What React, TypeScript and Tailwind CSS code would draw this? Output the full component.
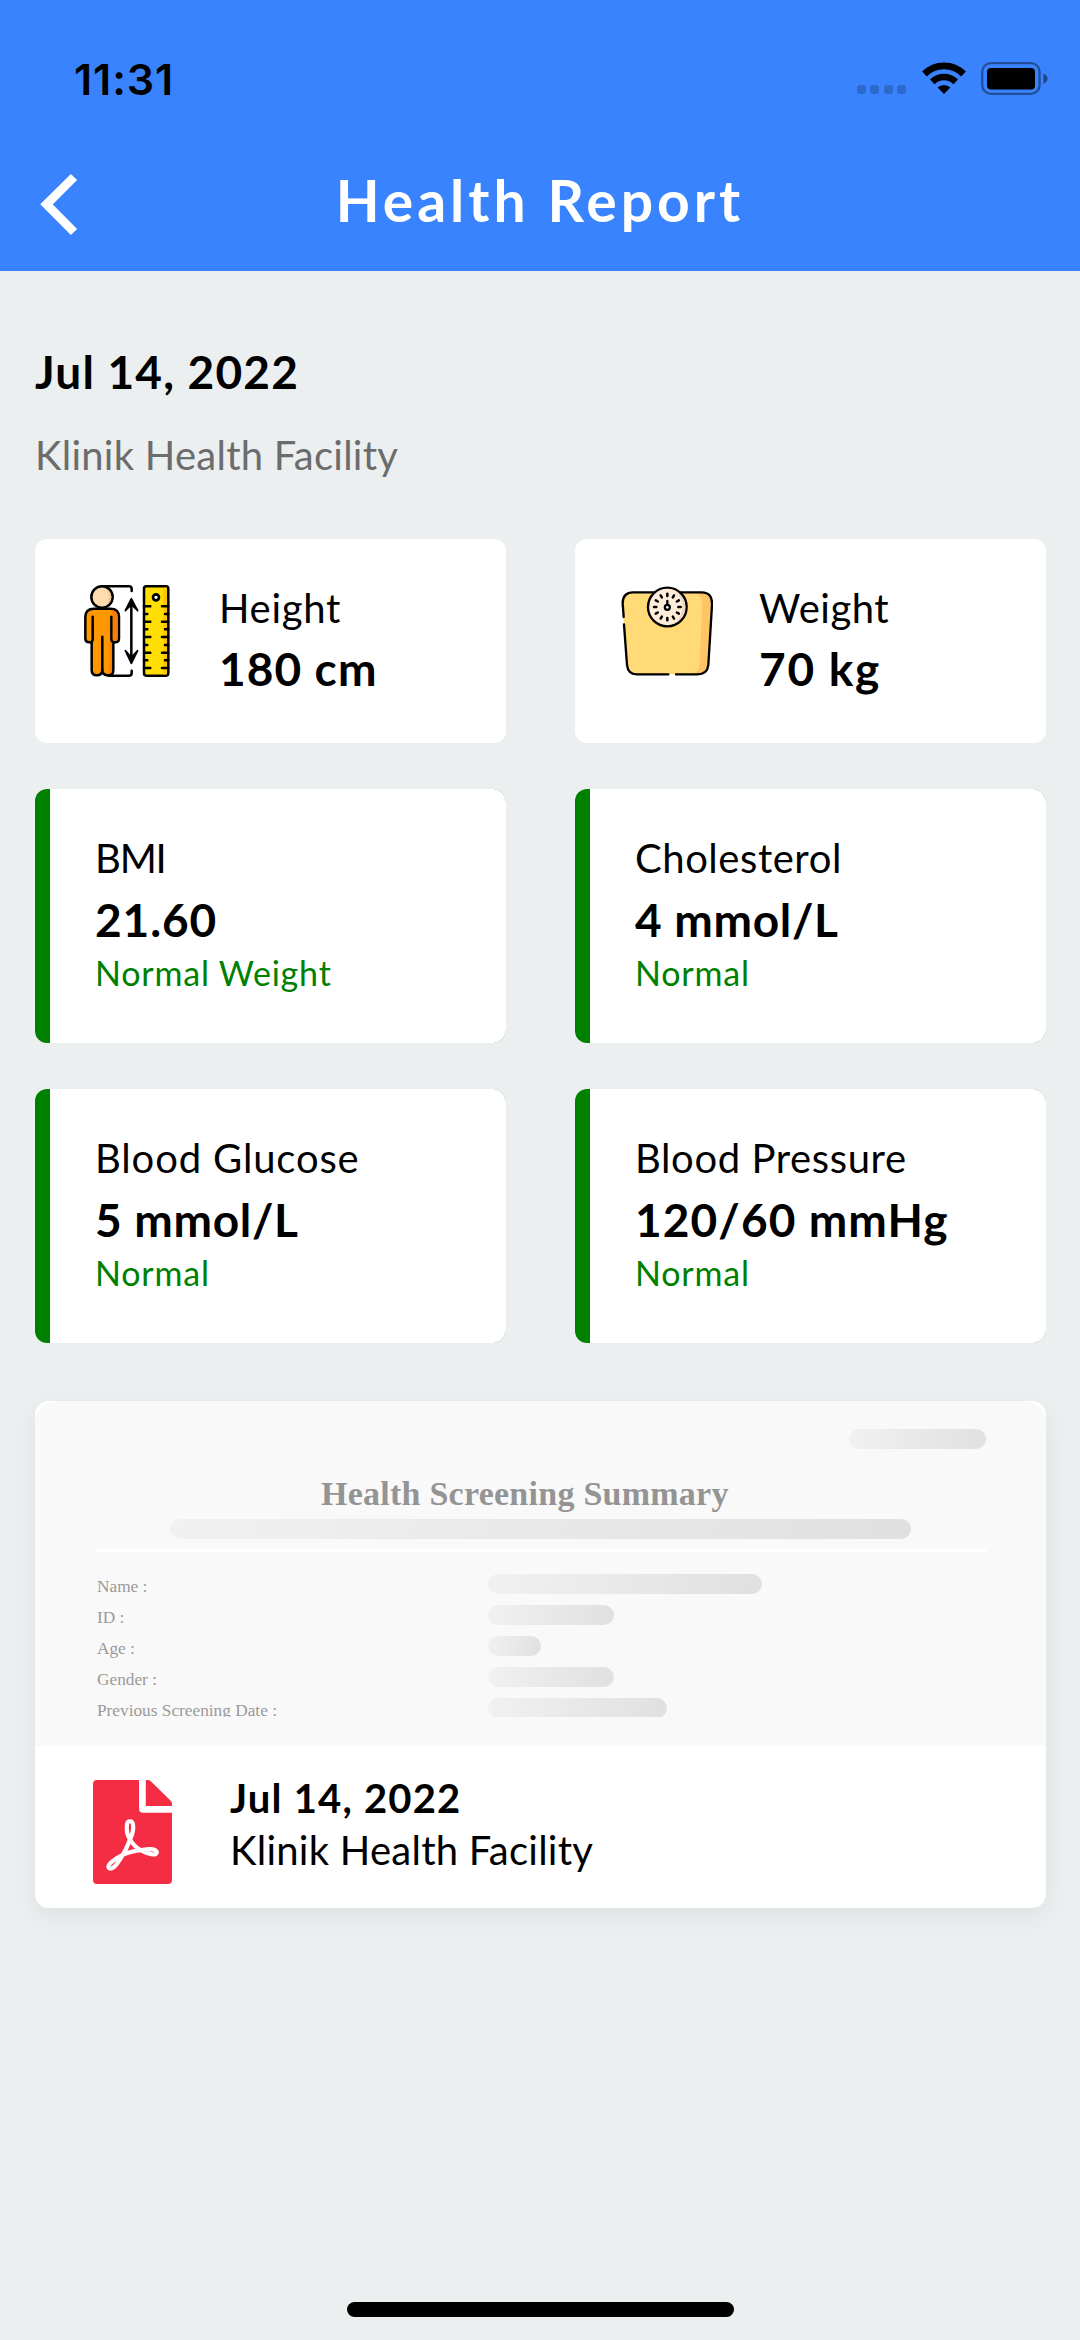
const LATO = "font-['Lato','Open_Sans',sans-serif]";
const SERIF = "font-['Liberation_Serif',serif]";

function StatusBar() {
  return (
    <div className="flex h-[165px] items-start justify-between pl-[74px] pr-8">
      <span className="mt-[57px] font-['Inter',sans-serif] text-[43px] font-semibold leading-[44px] tracking-[0.9px] text-black">
        11:31
      </span>
      <div className="mt-[62px] flex h-[33px] items-start">
        <div className="mt-[23px] flex gap-[4.5px]">
          {[0, 1, 2, 3].map((i) => (
            <span key={i} className="h-[9px] w-[9px] rounded-[3px] bg-black/20" />
          ))}
        </div>
        <svg className="ml-4 h-8 w-11" viewBox="0 0 44 32" fill="none">
          <path d="M2.5 12A27.6 27.6 0 0 1 41.5 12" stroke="#000" strokeWidth="6.8" />
          <path d="M10.3 19.8A16.5 16.5 0 0 1 33.7 19.8" stroke="#000" strokeWidth="6.6" />
          <path d="M15.6 25.6A9.2 9.2 0 0 1 28.4 25.6L22 32Z" fill="#000" />
        </svg>
        <svg className="ml-[15px] h-[33px] w-[67px]" viewBox="0 0 67 33">
          <rect x="1.2" y="1.2" width="57.4" height="30.6" rx="8.5" fill="none" stroke="#000" strokeOpacity="0.4" strokeWidth="2.3" />
          <rect x="6" y="6" width="48" height="21.4" rx="4" fill="#000" />
          <path d="M62.4 11.4C68 13.6 68 19.6 62.4 21.8Z" fill="#000" fillOpacity="0.45" />
        </svg>
      </div>
    </div>
  );
}

function Header() {
  return (
    <header className="h-[271px] shrink-0 bg-[#3983ff]">
      <StatusBar />
      <div className="grid grid-cols-[1fr_auto_1fr] items-start">
        <svg className="ml-10 mt-2 h-[63px] w-[38px]" viewBox="0 0 38 63" fill="none">
          <path d="M34 4L6.5 31.3L34 59" stroke="#fff" strokeWidth="8.8" />
        </svg>
        <h1 className={`${LATO} text-[57px] font-bold leading-[70px] tracking-[4px] text-white`}>Health Report</h1>
        <span />
      </div>
    </header>
  );
}

function HeightIcon() {
  const ticks = [109, 132, 155, 178, 201, 225, 248, 271, 294];
  return (
    <svg className="h-[92px] w-[92px]" viewBox="33 45 276 276" fill="none" stroke="#000" strokeWidth="7.5" strokeLinecap="round" strokeLinejoin="round">
      <path d="M96 49H177Q185 49 185 57V63M115 317H178Q185 317 185 310V302" />
      <circle cx="96" cy="81" r="32" fill="#ffdcb0" />
      <path d="M112 60Q122 81 110 102Q124 96 124 81Q123 66 112 60Z" fill="#efc99c" stroke="none" />
      <path
        d="M65 217H58Q46 217 46 205V141Q46 116 72 116H121Q147 116 147 141V205Q147 217 136 217H130V300Q130 316 115 316Q97 316 97 300Q97 316 80 316Q65 316 65 300Z"
        fill="#ff9800"
      />
      <path d="M126 120Q143 122 143 141V205Q143 213 136 213H128V140ZM126 219V300Q126 312 115 312Q122 300 118 219Z" fill="#fb7d05" stroke="none" />
      <path d="M68 140V208Q68 215 62 217M124 140V208Q124 215 131 217M97 200V300" />
      <path d="M184 92V276" />
      <path d="M166 122L184 86L203 122L184 104ZM166 242L184 280L203 242L184 262Z" fill="#000" strokeWidth="5" />
      <rect x="222" y="49" width="73" height="268" rx="7" fill="#ffde00" />
      <path d="M280 53H291V313H280Z" fill="#fdc400" stroke="none" />
      <circle cx="258" cy="82" r="9" fill="#fff" strokeWidth="8" />
      <path d={ticks.map((y, i) => (i % 2 ? `M222 ${y}H232M295 ${y}H285` : `M222 ${y}H241M295 ${y}H276`)).join("")} />
    </svg>
  );
}

function WeightIcon() {
  const angles = [0, 30, 60, 90, 120, 150, 180, 210, 240, 270, 300, 330];
  return (
    <svg className="h-[92px] w-[92px]" viewBox="63 45 276 276" fill="none" stroke="#000" strokeWidth="7" strokeLinecap="round" strokeLinejoin="round">
      <path d="M100 67H305Q338 67 336 105L325 285Q322 313 292 313H110Q84 313 81 285L68 105Q66 67 100 67Z" fill="#ffda76" stroke="none" />
      <path d="M286 69H305Q338 67 334 105L323 285Q320 311 292 311H278Q298 305 299 280L307 100Q307 76 286 69Z" fill="#ffc464" stroke="none" />
      <path d="M71 141L68 100Q68 67 100 67H305Q338 67 336 105L325 285Q322 313 292 313H228M205 313H110Q84 313 81 285L72 163" />
      <circle cx="202" cy="111" r="58" fill="#ffeddb" />
      <path d="M222 65Q248 80 248 111Q248 142 222 157Q256 146 256 111Q256 76 222 65Z" fill="#ecd5bf" stroke="none" />
      {angles.map((a) => (
        <path key={a} d="M202 71V78" strokeWidth="7.5" transform={`rotate(${a} 202 111)`} />
      ))}
      <circle cx="202" cy="112" r="7.5" fill="#fff" strokeWidth="7" />
      <path d="M202 104V93" />
    </svg>
  );
}

function PdfIcon() {
  return (
    <svg className="h-[104px] w-[79px]" viewBox="70 60 235 311" preserveAspectRatio="none">
      <path
        d="M82 60H207V146Q207 158 219 158H305V359Q305 371 293 371H82Q70 371 70 359V72Q70 60 82 60ZM227 60H233Q238 60 242 64L302 123Q305 126 305 131V138H227Z"
        fill="#f42c44"
      />
      <path
        d="M180 238C171 222 169 206 171 193C173 180 187 180 189 193C191 206 188 222 180 238C170 266 156 290 141 311C133 324 118 329 116 321C113 312 135 295 160 283C180 274 200 271 218 269C240 265 258 267 260 276C261 287 238 284 216 272C200 264 190 255 180 238Z"
        fill="none"
        stroke="#fff"
        strokeWidth="12.5"
        strokeLinejoin="round"
      />
    </svg>
  );
}

const LABEL = "text-[40px] leading-[48px]";
const VALUE = "text-[46px] font-bold leading-[56px]";

function MeasureCard({ icon, label, labelClass, value, valueClass }: { icon: React.ReactNode; label: string; labelClass: string; value: string; valueClass: string }) {
  return (
    <div className="flex h-[204px] items-start gap-[46px] rounded-xl bg-white pl-[46px] pt-[45px]">
      <div className="mt-px">{icon}</div>
      <div className="flex flex-col gap-[9px]">
        <span className={`${LABEL} ${labelClass}`}>{label}</span>
        <span className={`${VALUE} ${valueClass}`}>{value}</span>
      </div>
    </div>
  );
}

function ResultCard({ label, labelClass, value, valueClass, status }: { label: string; labelClass: string; value: string; valueClass: string; status: string }) {
  return (
    <div className="relative flex h-[254px] overflow-hidden rounded-xl bg-white">
      <div className="w-[15px] shrink-0 bg-[#008000]" />
      <div className="flex flex-col items-start pl-[45px] pt-[45px]">
        <span className={`${LABEL} ${labelClass}`}>{label}</span>
        <span className={`mt-2.5 ${VALUE} ${valueClass}`}>{value}</span>
        <span className="mt-1 text-[34px] leading-[42px] tracking-[0.8px] text-[#008000]">{status}</span>
      </div>
      <span className="absolute right-0 top-0 h-3 w-3 rounded-tr-xl border-r border-t border-[#008000]/20" />
      <span className="absolute bottom-0 right-0 h-3 w-3 rounded-br-xl border-b border-r border-[#008000]/20" />
    </div>
  );
}

const RESULTS = [
  { label: "BMI", labelClass: "tracking-[-1.2px]", value: "21.60", valueClass: "tracking-[0.9px]", status: "Normal Weight" },
  { label: "Cholesterol", labelClass: "tracking-[0.55px]", value: "4 mmol/L", valueClass: "tracking-[0.7px]", status: "Normal" },
  { label: "Blood Glucose", labelClass: "tracking-[0.85px]", value: "5 mmol/L", valueClass: "tracking-[0.7px]", status: "Normal" },
  { label: "Blood Pressure", labelClass: "tracking-[0.6px]", value: "120/60 mmHg", valueClass: "tracking-[1.1px]", status: "Normal" },
];

const BAR = "bg-[linear-gradient(100deg,#f1f1f1,#e0e0e0)]";

const FIELDS = [
  { label: "Name :", width: "w-[274px]" },
  { label: "ID :", width: "w-[126px]" },
  { label: "Age :", width: "w-[53px]" },
  { label: "Gender :", width: "w-[126px]" },
  { label: "Previous Screening Date :", width: "w-[179px]" },
];

function DocumentCard() {
  return (
    <div className="mt-[58px] h-[507px] rounded-[14px] bg-white shadow-[0_9px_26px_rgba(0,0,0,0.06)]">
      <div className={`${SERIF} flex h-[345px] flex-col rounded-t-[22px] bg-[#f9f9f9] pl-[60px] pr-[60px] pt-7`}>
        <div className={`h-5 w-[137px] shrink-0 self-end rounded-full ${BAR}`} />
        <span className="ml-[226px] mt-[25px] text-[34px] font-bold leading-10 tracking-[0.25px] text-[#949494]">
          Health Screening Summary
        </span>
        <div className={`mt-[5px] h-5 w-[741px] shrink-0 self-center rounded-full ${BAR}`} />
        <div className="mt-2.5 h-[3px] shrink-0 bg-white" />
        <div className="mt-[22px] flex h-[143px] shrink-0 flex-col gap-[11px] overflow-hidden pl-0.5">
          {FIELDS.map((f) => (
            <div key={f.label} className="flex h-5 shrink-0 items-start">
              <span className="w-[391px] text-[17.3px] leading-[26px] text-[#9a9a9a]">{f.label}</span>
              <span className={`h-5 rounded-full ${BAR} ${f.width}`} />
            </div>
          ))}
        </div>
      </div>
      <div className="flex items-start pl-[58px] pt-[28px]">
        <div className="mt-1.5">
          <PdfIcon />
        </div>
        <div className="ml-[58px] flex flex-col gap-1">
          <span className="text-[40px] font-bold leading-[48px] tracking-[1.2px]">Jul 14, 2022</span>
          <span className="text-[40px] leading-[48px] tracking-[0.25px]">Klinik Health Facility</span>
        </div>
      </div>
    </div>
  );
}

export default function App() {
  return (
    <div className="flex h-[2340px] w-[1080px] flex-col overflow-hidden bg-[#ebeff0] text-black">
      <Header />
      <main className={`${LATO} pl-[35px] pr-[34px] pt-[73px]`}>
        <h2 className="text-[46px] font-bold leading-[56px] tracking-[1.2px]">Jul 14, 2022</h2>
        <p className="mt-[31px] text-[40px] leading-[48px] tracking-[0.25px] text-[#6c6c6c]">Klinik Health Facility</p>
        <div className="mt-[60px] grid grid-cols-2 gap-x-[69px] gap-y-[46px]">
          <MeasureCard icon={<HeightIcon />} label="Height" labelClass="tracking-[0.7px]" value="180 cm" valueClass="tracking-[1.1px]" />
          <MeasureCard icon={<WeightIcon />} label="Weight" labelClass="tracking-[0.5px]" value="70 kg" valueClass="tracking-[1.7px]" />
          {RESULTS.map((r) => (
            <ResultCard key={r.label} {...r} />
          ))}
        </div>
        <DocumentCard />
      </main>
      <div className="mb-[23px] mt-auto h-[15px] w-[387px] shrink-0 self-center rounded-full bg-black" />
    </div>
  );
}
